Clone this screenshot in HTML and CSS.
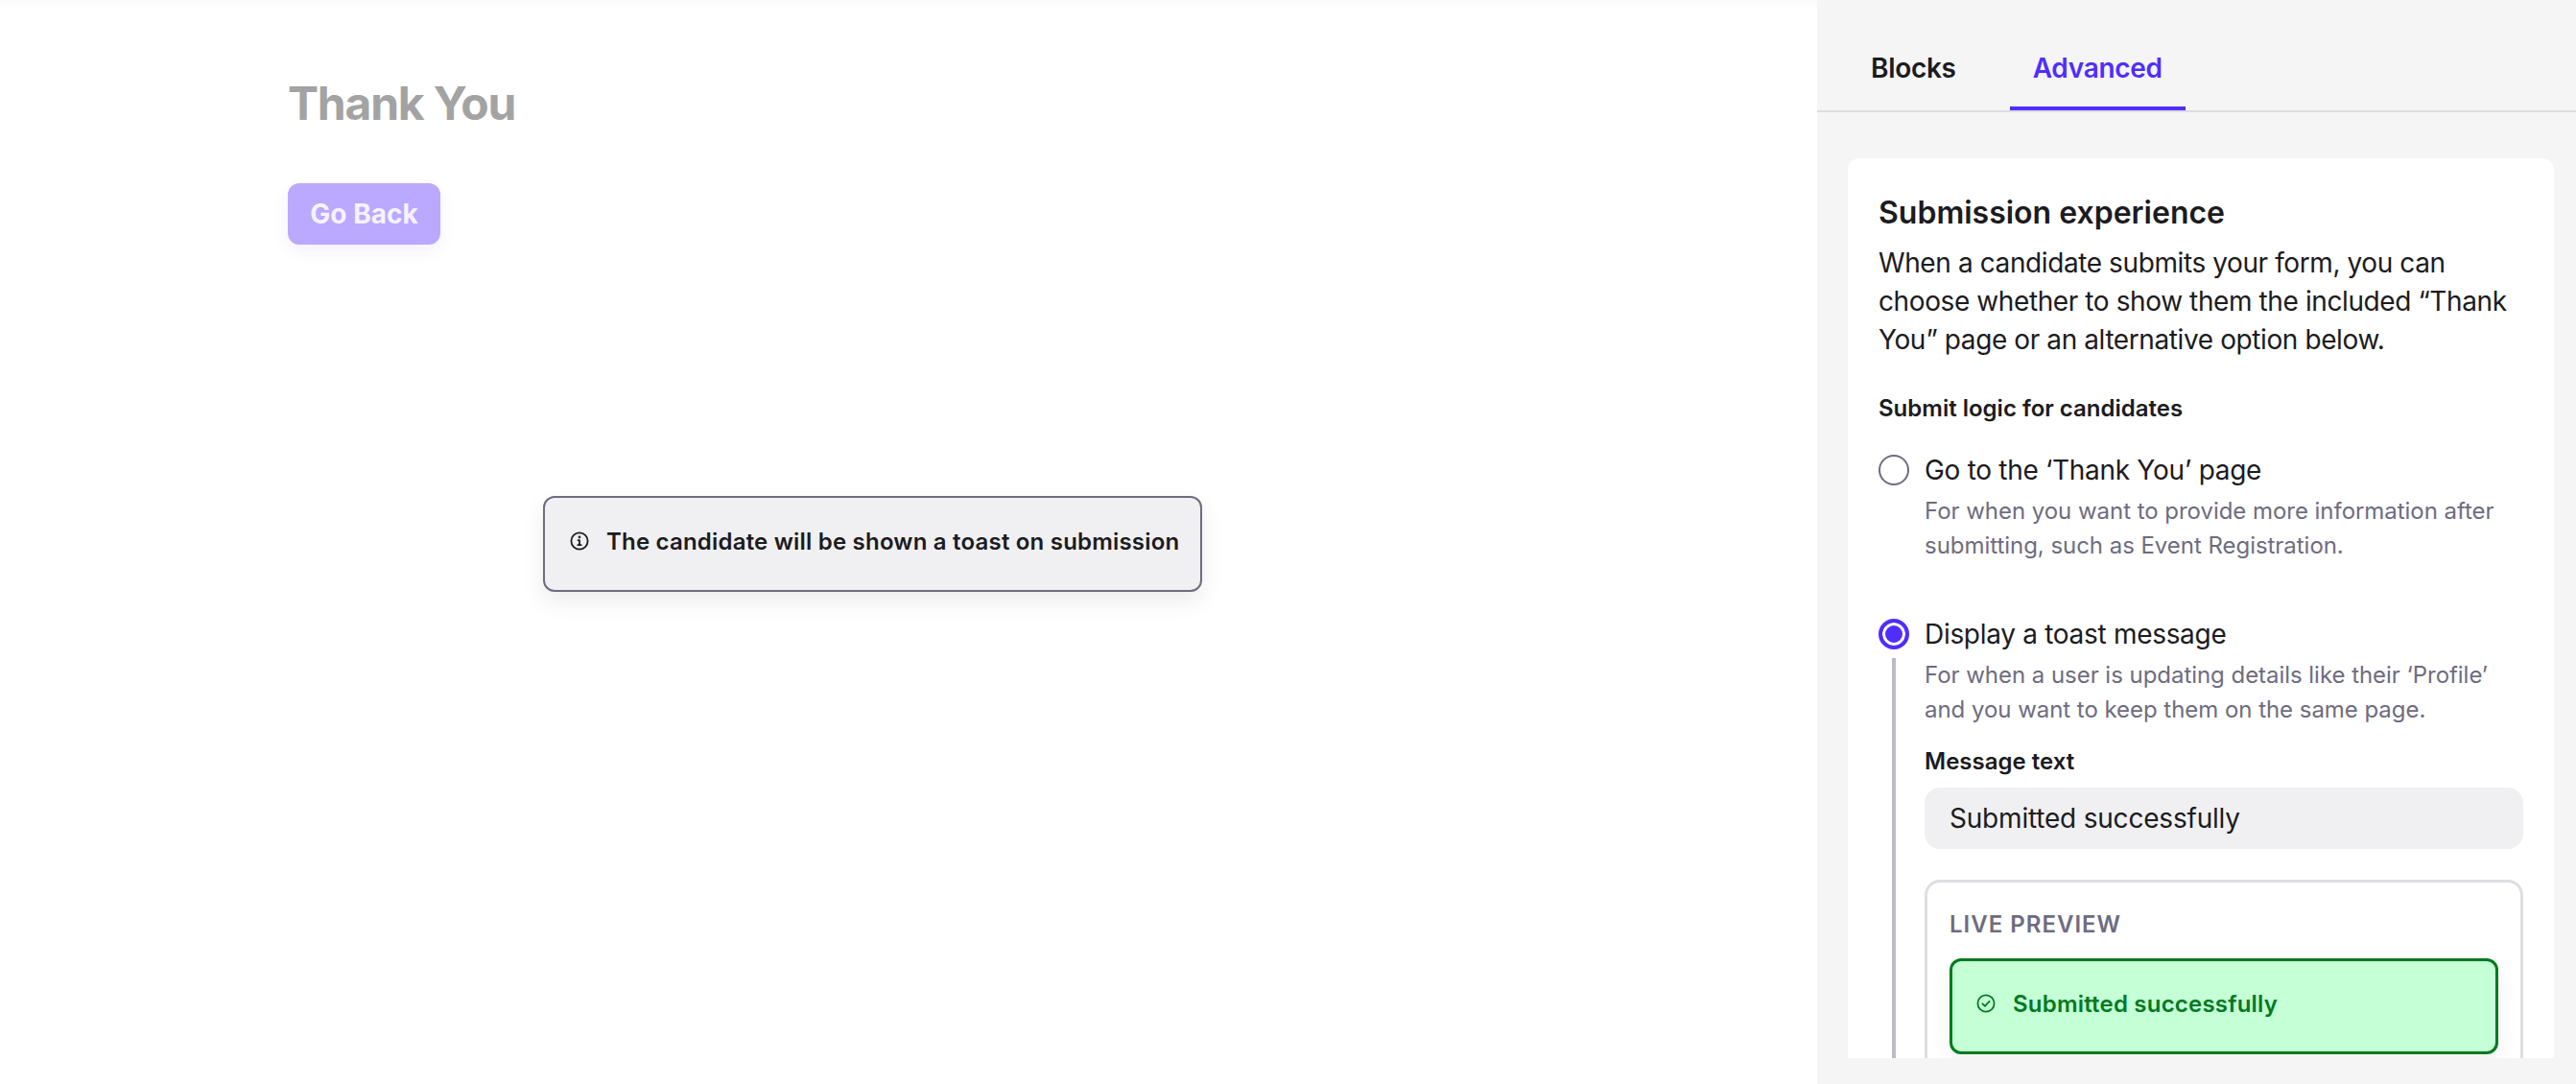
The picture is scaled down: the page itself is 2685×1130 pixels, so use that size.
FILE: index.html
```html
<!DOCTYPE html>
<html lang="en">
<head>
    <meta charset="UTF-8">
    <meta name="viewport" content="width=device-width, initial-scale=1.0">
    <title>Submission experience</title>
    <link rel="stylesheet" href="styles.css">
</head>
<body>
    <div class="layout">
        <main class="canvas">
            <div class="canvas-content">
                <h1 class="thanks-title">Thank You</h1>
                <button type="button" class="back-btn">Go Back</button>
            </div>
            <div class="toast toast-info">
                <svg class="toast-icon" viewBox="0 0 20 20" fill="none" stroke="currentColor" stroke-width="1.8" stroke-linecap="round">
                    <circle cx="10" cy="10" r="8.6"/>
                    <path d="M10 9.2v5M8.3 14.2h3.4M8.6 9.2H10"/>
                    <circle cx="10" cy="5.9" r="0.5" fill="currentColor"/>
                </svg>
                <span>The candidate will be shown a toast on submission</span>
            </div>
        </main>

        <aside class="sidebar">
            <nav class="tabs">
                <a class="tab">Blocks</a>
                <a class="tab tab-active">Advanced</a>
            </nav>
            <section class="card">
                <h2 class="card-title">Submission experience</h2>
                <p class="card-intro">When a candidate submits your form, you can choose whether to show them the included “Thank You” page or an alternative option below.</p>

                <h3 class="field-label logic-label">Submit logic for candidates</h3>

                <div class="option">
                    <div class="option-head">
                        <span class="radio"></span>
                        <span>Go to the ‘Thank You’ page</span>
                    </div>
                    <div class="option-body">
                        <p class="option-desc">For when you want to provide more information after submitting, such as Event Registration.</p>
                    </div>
                </div>

                <div class="option">
                    <div class="option-head">
                        <span class="radio radio-checked"></span>
                        <span>Display a toast message</span>
                    </div>
                    <div class="option-body option-body-open">
                        <p class="option-desc">For when a user is updating details like their ‘Profile’ and you want to keep them on the same page.</p>
                        <h3 class="field-label message-label">Message text</h3>
                        <div class="text-input">Submitted successfully</div>
                        <div class="preview">
                            <div class="preview-label">LIVE PREVIEW</div>
                            <div class="toast toast-success">
                                <svg class="toast-icon" viewBox="0 0 20 20" fill="none" stroke="currentColor" stroke-width="1.8" stroke-linecap="round" stroke-linejoin="round">
                                    <circle cx="10" cy="10" r="8.6"/>
                                    <path d="M6.4 10.4l2.5 2.4 4.7-5"/>
                                </svg>
                                <span>Submitted successfully</span>
                            </div>
                        </div>
                    </div>
                </div>
            </section>
        </aside>
    </div>
</body>
</html>
```

FILE: styles.css
```css
* {
    margin: 0;
    padding: 0;
    box-sizing: border-box;
    font-family: 'Inter', 'Liberation Sans', sans-serif;
}

body {
    background: white;
    color: #1c1b20;
    height: 100vh;
    overflow: hidden;
}

.layout {
    display: flex;
    height: 100vh;
}

.canvas {
    position: relative;
    flex: 1;
    background: linear-gradient(#fafafa, white 10px);
}

.canvas-content {
    padding: 79px 0 0 300px;
}

.thanks-title {
    color: #a3a3a3;
    font-size: 48px;
    font-weight: 700;
    line-height: 58px;
    letter-spacing: -1.2px;
}

.back-btn {
    display: block;
    width: 159px;
    height: 64px;
    margin-top: 54px;
    background: #baa9ff;
    color: #f6f3ff;
    border: none;
    border-radius: 12px;
    font-size: 28px;
    font-weight: 700;
    box-shadow: 0 6px 16px rgba(90, 60, 255, 0.08);
}

.toast {
    display: flex;
    align-items: center;
    gap: 18px;
    padding-bottom: 6px;
    border-style: solid;
    border-radius: 12px;
    font-size: 24px;
    font-weight: 600;
    letter-spacing: 0.2px;
}

.toast-icon {
    width: 20px;
    height: 20px;
    flex: none;
}

.toast-info {
    position: absolute;
    left: 566px;
    top: 517px;
    width: 687px;
    height: 100px;
    padding-left: 26px;
    background: #f0f0f2;
    border-width: 2px;
    border-color: #6e6c80;
    box-shadow: 0 10px 24px rgba(0, 0, 0, 0.08);
}

.sidebar {
    display: flex;
    flex-direction: column;
    width: 791px;
    background: #f5f5f5;
    padding-bottom: 27px;
}

.tabs {
    display: flex;
    height: 117px;
    flex: none;
    padding-left: 32px;
    gap: 32px;
    border-bottom: 2px solid #dddde2;
}

.tab {
    display: flex;
    align-items: center;
    height: 115px;
    padding: 27px 24px 0;
    font-size: 28px;
    font-weight: 600;
    letter-spacing: -0.3px;
    color: #1c1b20;
}

.tab-active {
    padding-top: 31px;
    color: #4f2dff;
    border-bottom: 4px solid #4f2dff;
}

.card {
    flex: 1;
    min-height: 0;
    overflow: hidden;
    margin: 48px 23px 0 32px;
    padding: 37px 32px 0;
    background: white;
    border-radius: 12px 12px 0 0;
}

.card-title {
    font-size: 32px;
    font-weight: 600;
    line-height: 40px;
}

.card-intro {
    margin-top: 12px;
    font-size: 28px;
    line-height: 40px;
    letter-spacing: -0.4px;
}

.field-label {
    font-size: 24px;
    font-weight: 600;
    line-height: 32px;
}

.logic-label {
    margin-top: 36px;
}

.option {
    margin-top: 30px;
}

.option + .option {
    margin-top: 56px;
}

.option-head {
    display: flex;
    align-items: center;
    gap: 16px;
    height: 36px;
    font-size: 28px;
    letter-spacing: -0.3px;
}

.radio {
    width: 32px;
    height: 32px;
    flex: none;
    border: 2px solid #6e6c80;
    border-radius: 50%;
}

.radio-checked {
    border: 4px solid #4f2dff;
    background: #4f2dff;
    box-shadow: inset 0 0 0 3px white;
}

.option-body {
    margin-top: 7px;
    margin-left: 48px;
}

.option-body-open {
    margin-left: 14px;
    padding-left: 30px;
    border-left: 4px solid #bcbbc4;
}

.option-desc {
    font-size: 24px;
    line-height: 36px;
    letter-spacing: -0.04px;
    color: #6e6c80;
}

.message-label {
    margin-top: 20px;
}

.text-input {
    display: flex;
    align-items: center;
    height: 64px;
    margin-top: 11px;
    padding-left: 26px;
    background: #f0f0f2;
    border-radius: 16px;
    font-size: 28px;
    letter-spacing: -0.2px;
}

.preview {
    margin-top: 32px;
    padding: 28px 23px 40px;
    border: 3px solid #dddde2;
    border-radius: 16px;
}

.preview-label {
    font-size: 24px;
    font-weight: 600;
    line-height: 32px;
    letter-spacing: 1px;
    color: #6e6c80;
}

.toast-success {
    height: 100px;
    margin-top: 19px;
    padding-left: 25px;
    background: #c4ffd6;
    border-width: 3px;
    border-color: #007a1f;
    color: #007a1f;
    box-shadow: 0 10px 24px rgba(0, 0, 0, 0.06);
}
```
